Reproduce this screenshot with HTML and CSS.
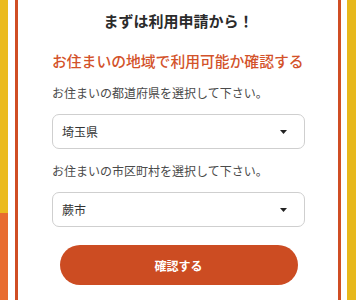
FILE: index.html
```html
<!DOCTYPE html>
<html lang="ja">
<head>
<meta charset="utf-8">
<link rel="stylesheet" href="styles.css">
</head>
<body>
<div class="page">
  <div class="deco-left"></div>
  <div class="card">
    <h1 class="heading">まずは利用申請から！</h1>
    <h2 class="title">お住まいの地域で利用可能か確認する</h2>
    <p class="label">お住まいの都道府県を選択して下さい。</p>
    <div class="select">
      <span class="select-value">埼玉県</span>
      <svg class="caret" width="7" height="4" viewBox="0 0 7 4"><path d="M0 0H7L3.5 4Z" fill="#222"/></svg>
    </div>
    <p class="label">お住まいの市区町村を選択して下さい。</p>
    <div class="select">
      <span class="select-value">蕨市</span>
      <svg class="caret" width="7" height="4" viewBox="0 0 7 4"><path d="M0 0H7L3.5 4Z" fill="#222"/></svg>
    </div>
    <button class="btn">確認する</button>
  </div>
  <div class="deco-right"></div>
</div>
</body>
</html>
```
FILE: styles.css
```css
html, body {
  margin: 0;
  padding: 0;
  background: #fff;
}
body {
  width: 356px;
  height: 300px;
  overflow: hidden;
  font-family: "Noto Sans CJK JP", "Noto Sans", sans-serif;
}
.page {
  display: flex;
  height: 300px;
}
.deco-left {
  width: 8px;
  flex: none;
  background: linear-gradient(to bottom, #ebbb1e 0, #ebbb1e 213px, #e86c2f 213px);
}
.card {
  flex: none;
  width: 253px;
  margin-left: 7px;
  margin-right: 6px;
  border-left: 3px solid #d04e24;
  border-right: 3px solid #d04e24;
  padding: 11px 33px 0 34px;
  box-sizing: content-box;
  display: flex;
  flex-direction: column;
}
.deco-right {
  width: 9px;
  flex: none;
  background: #e7b81c;
}
.heading {
  margin: 0;
  font-size: 15px;
  line-height: 20px;
  font-weight: 700;
  color: #2b2b2b;
  text-align: center;
}
.title {
  margin: 20px 0 0;
  font-size: 14.8px;
  line-height: 20px;
  font-weight: 500;
  color: #d3522a;
  white-space: nowrap;
}
.label {
  margin: 13px 0 0;
  font-size: 12px;
  line-height: 18px;
  color: #4a4a4a;
  white-space: nowrap;
}
.label + .select { margin-top: 12px; }
.select + .label { margin-top: 13px; }
.select {
  height: 35px;
  box-sizing: border-box;
  border: 1px solid #cfcfcf;
  border-radius: 7px;
  display: flex;
  align-items: center;
  justify-content: space-between;
  padding: 0 17px 0 9px;
}
.select-value {
  font-size: 12px;
  color: #333;
}
.btn {
  margin: 18px auto 0;
  width: 238px;
  height: 40px;
  border: none;
  border-radius: 20px;
  background: #cc4c22;
  color: #fff;
  font-family: inherit;
  font-size: 12px;
  font-weight: 700;
  padding: 0;
}
```
